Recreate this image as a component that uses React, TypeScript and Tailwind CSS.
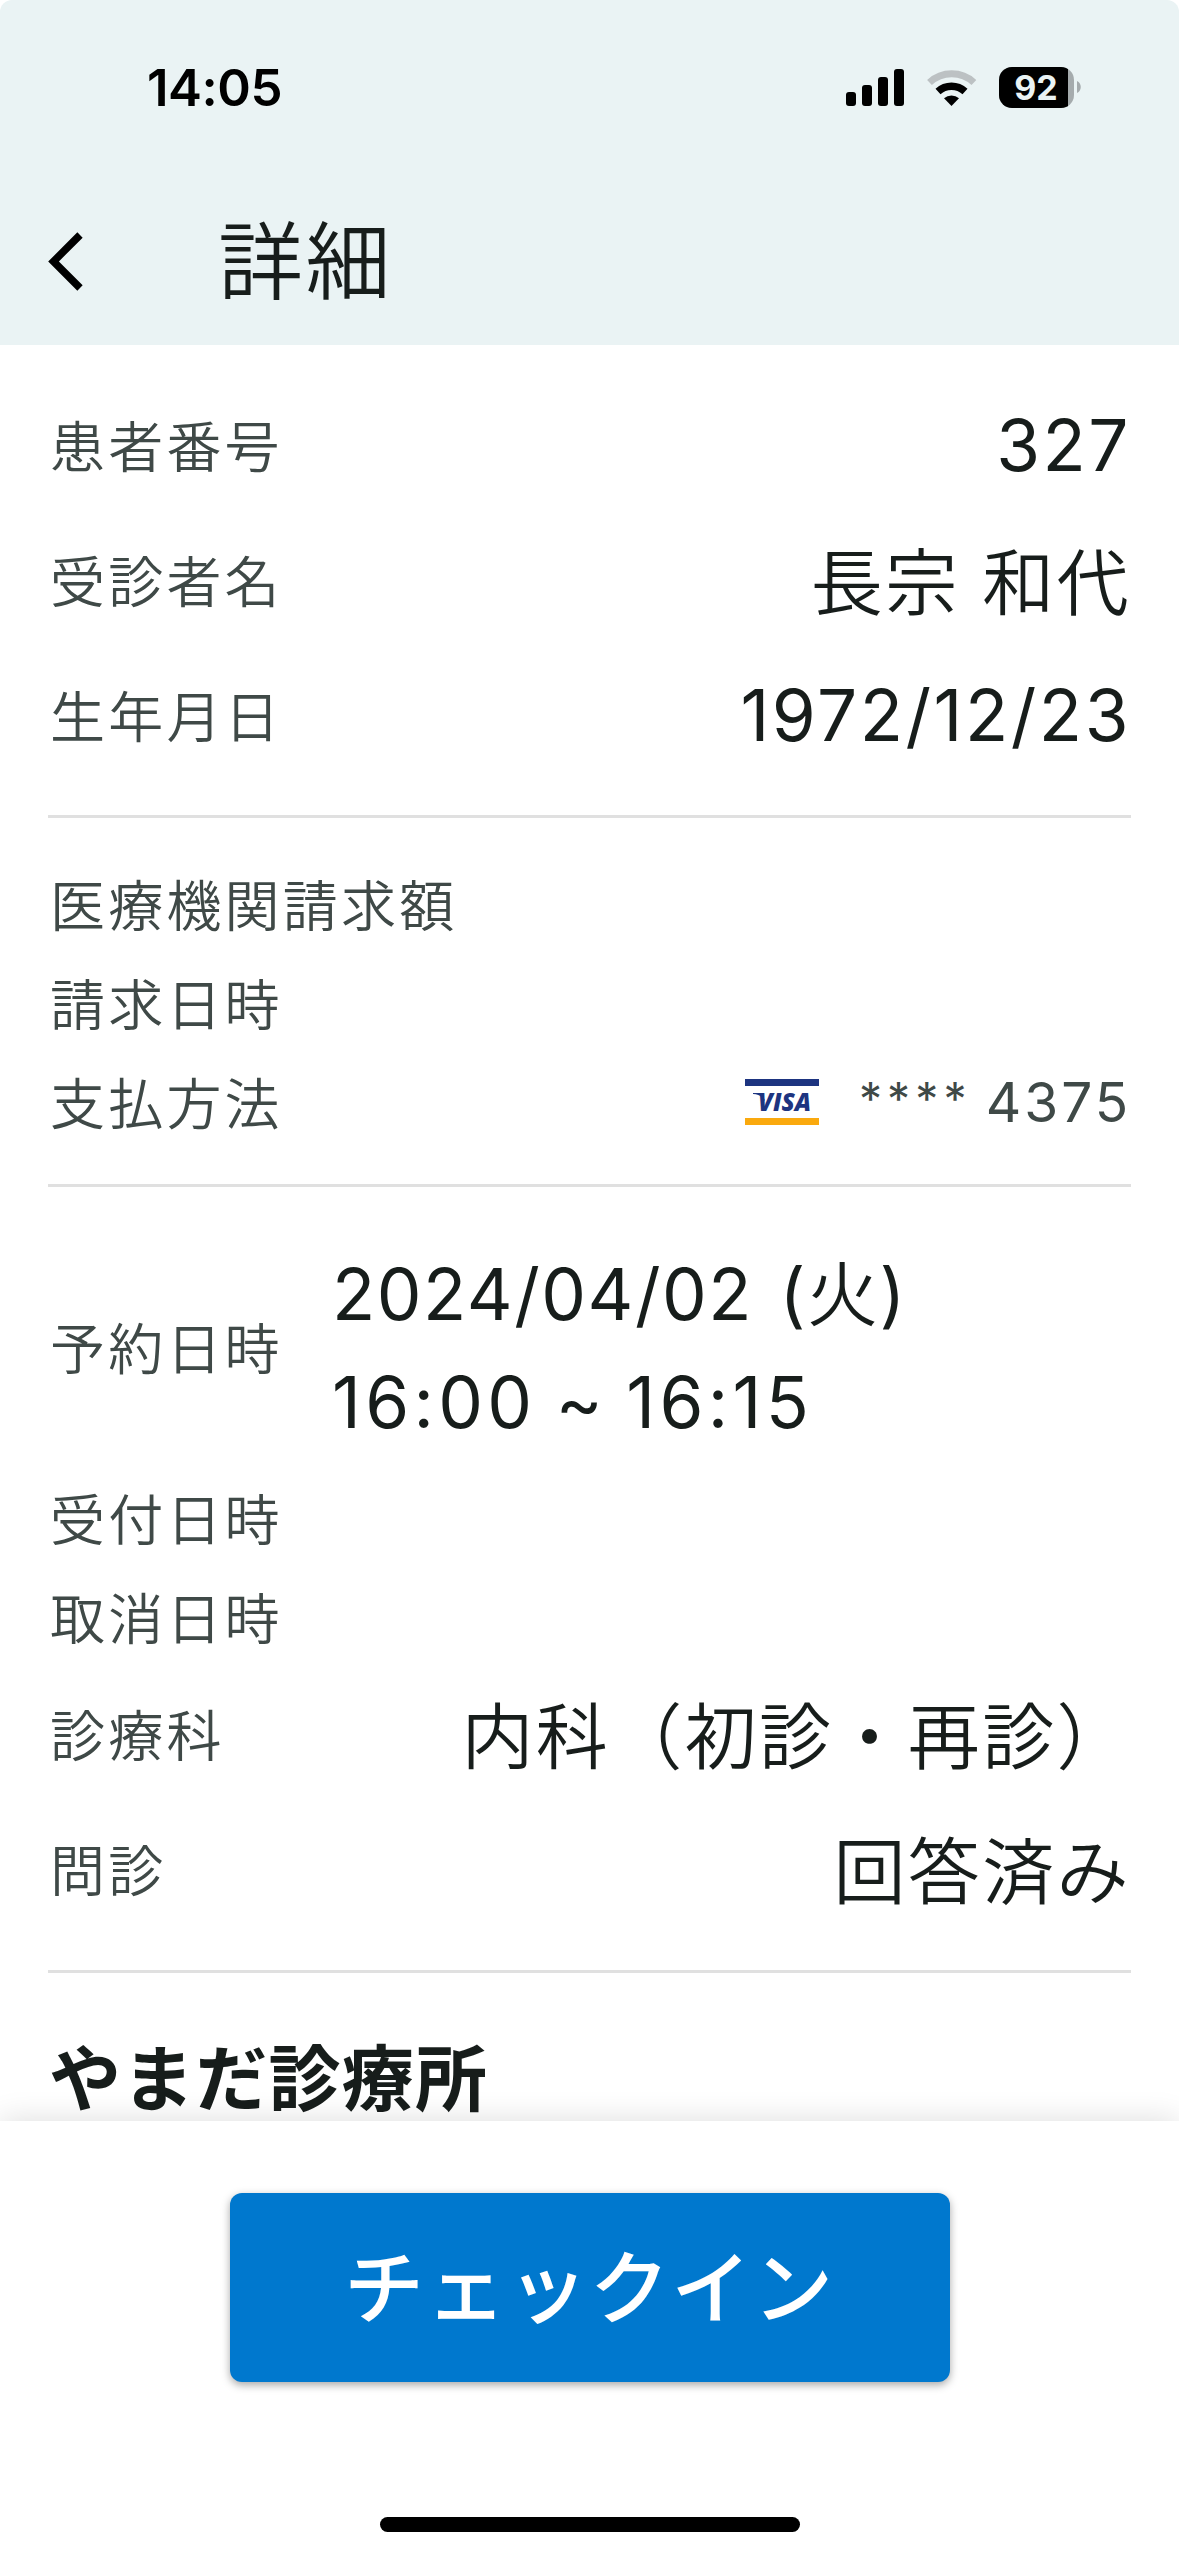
import { clsx } from "clsx"
import type { ReactNode } from "react"

function StatusBar() {
  return (
    <div className="flex h-[176px] items-start justify-between pl-[147px] pr-[98px]">
      <span className="mt-[63px] text-[51px] leading-[50px] font-semibold tracking-[-0.5px] text-black">14:05</span>
      <svg className="mt-[64px]" width="235" height="48" viewBox="846 64 235 48">
        <rect x="846" y="92" width="10" height="14" rx="3" />
        <rect x="862" y="85" width="10" height="21" rx="3" />
        <rect x="878" y="77" width="10" height="29" rx="3" />
        <rect x="894" y="69" width="10" height="37" rx="3" />
        <path
          d="M929.5 82.5a32.6 32.6 0 0 1 44.4 0"
          fill="none"
          stroke="#bcc1c3"
          strokeWidth="7"
        />
        <path d="M938 91.5a20 20 0 0 1 27 0" fill="none" stroke="#000" strokeWidth="7.4" />
        <path d="M944 98.2a12 12 0 0 1 15 0L951.5 106z" />
        <clipPath id="battery">
          <rect x="999" y="67" width="75" height="41" rx="13" />
        </clipPath>
        <g clipPath="url(#battery)">
          <rect x="999" y="67" width="75" height="41" fill="#a5abad" />
          <rect x="999" y="67" width="69" height="41" />
        </g>
        <path d="M1077 81c5 2 5 10 0 12z" fill="#a5abad" />
        <text x="1036" y="100" textAnchor="middle" className="fill-[#eaf3f4] text-[34px] font-bold">
          92
        </text>
      </svg>
    </div>
  )
}

function Label({ children }: { children: ReactNode }) {
  return (
    <span className="pt-px pl-[2px] text-[55px] leading-[60px] font-[350] tracking-[3.2px] text-[#3f4947]">
      {children}
    </span>
  )
}

function Row({ label, children, tall }: { label: string; children?: ReactNode; tall?: boolean }) {
  return (
    <div className={clsx("flex items-center justify-between", tall ? "h-[135px]" : "h-[99px]")}>
      <Label>{label}</Label>
      {children}
    </div>
  )
}

function TextValue({ children }: { children: ReactNode }) {
  return (
    <span className="pt-[2px] text-[72px] leading-[80px] font-[350] tracking-[2.4px] text-[#171d1b]">
      {children}
    </span>
  )
}

function NumberValue({ children }: { children: ReactNode }) {
  return (
    <span className="pb-[3px] text-[71px] leading-[80px] font-normal tracking-[2.5px] text-[#171d1b]">
      {children}
    </span>
  )
}

function VisaLogo() {
  return (
    <svg width="74" height="46" viewBox="0 0 74 46">
      <rect width="74" height="7" fill="#1d3480" />
      <rect y="39" width="74" height="7" fill="#faa90e" />
      <text
        x="13"
        y="32"
        textLength="53"
        lengthAdjust="spacingAndGlyphs"
        className="fill-[#1d3480] font-['Open_Sans'] text-[25px] font-extrabold italic tracking-normal"
      >
        VISA
      </text>
      <path d="M8 14h9l3 8-3-3c-2-3-5-4-9-4z" fill="#1d3480" />
    </svg>
  )
}

export default function App() {
  return (
    <div
      lang="ja"
      className="flex h-[2556px] w-[1179px] flex-col overflow-hidden bg-white font-['Inter','Noto_Sans_CJK_JP',sans-serif]"
    >
      <header className="h-[345px] shrink-0 rounded-t-[12px] bg-[#eaf3f4]">
        <StatusBar />
        <div className="flex h-[169px] items-center pl-[48px]">
          <svg width="36" height="66" viewBox="0 0 36 66" className="shrink-0">
            <path d="M32 7L5.5 33.5L32 60" fill="none" stroke="#000" strokeWidth="7.5" />
          </svg>
          <h1 className="ml-[134px] pt-[4px] text-[85px] leading-[100px] font-[350] tracking-[2.6px] text-[#171d1b]">
            詳細
          </h1>
        </div>
      </header>

      <main className="flex h-[1776px] shrink-0 flex-col overflow-hidden px-[48px]">
        <section className="h-[473px] shrink-0 border-b-[3px] border-[#e0e0e0] pt-[34px]">
          <Row label="患者番号" tall>
            <NumberValue>327</NumberValue>
          </Row>
          <Row label="受診者名" tall>
            <TextValue>長宗 和代</TextValue>
          </Row>
          <Row label="生年月日" tall>
            <NumberValue>1972/12/23</NumberValue>
          </Row>
        </section>

        <section className="h-[369px] shrink-0 border-b-[3px] border-[#e0e0e0] pt-[38px]">
          <Row label="医療機関請求額" />
          <Row label="請求日時" />
          <Row label="支払方法">
            <div className="flex items-center pb-[3px] text-[55px] leading-[60px] text-[#3f4947]">
              <VisaLogo />
              <span className="ml-[40px] pb-[7px] text-[46px] tracking-[5.2px]">****</span>
              <span className="ml-[14px] tracking-[2.9px]">4375</span>
            </div>
          </Row>
        </section>

        <section className="h-[786px] shrink-0 border-b-[3px] border-[#e0e0e0] pt-[39px]">
          <div className="flex h-[244px] items-center">
            <div className="flex w-[284px]">
              <Label>予約日時</Label>
            </div>
            <div className="text-[71px] leading-[108px] text-[#171d1b]">
              <p className="tracking-[1.5px] [word-spacing:5px]">
                2024/04/02 (<span className="font-[350]">火</span>)
              </p>
              <p className="tracking-[4.3px] [word-spacing:-5px]">16:00 ~ 16:15</p>
            </div>
          </div>
          <Row label="受付日時" />
          <Row label="取消日時" />
          <Row label="診療科" tall>
            <TextValue>内科（初診・再診）</TextValue>
          </Row>
          <Row label="問診" tall>
            <TextValue>回答済み</TextValue>
          </Row>
        </section>

        <h2 className="pt-[56px] pl-px text-[72px] leading-[100px] font-semibold tracking-[1.2px] text-[#171d1b]">
          やまだ診療所
        </h2>
      </main>

      <footer className="relative flex flex-1 flex-col items-center bg-white pt-[72px] shadow-[0_0_30px_rgba(0,0,0,0.14)]">
        <button className="h-[189px] w-[720px] rounded-[12px] bg-[#0078ce] text-[80px] leading-[100px] font-medium tracking-[1.8px] text-white shadow-[0_3px_8px_rgba(0,0,0,0.35)]">
          チェックイン
        </button>
        <div className="mt-[135px] h-[15px] w-[420px] rounded-full bg-black" />
      </footer>
    </div>
  )
}
